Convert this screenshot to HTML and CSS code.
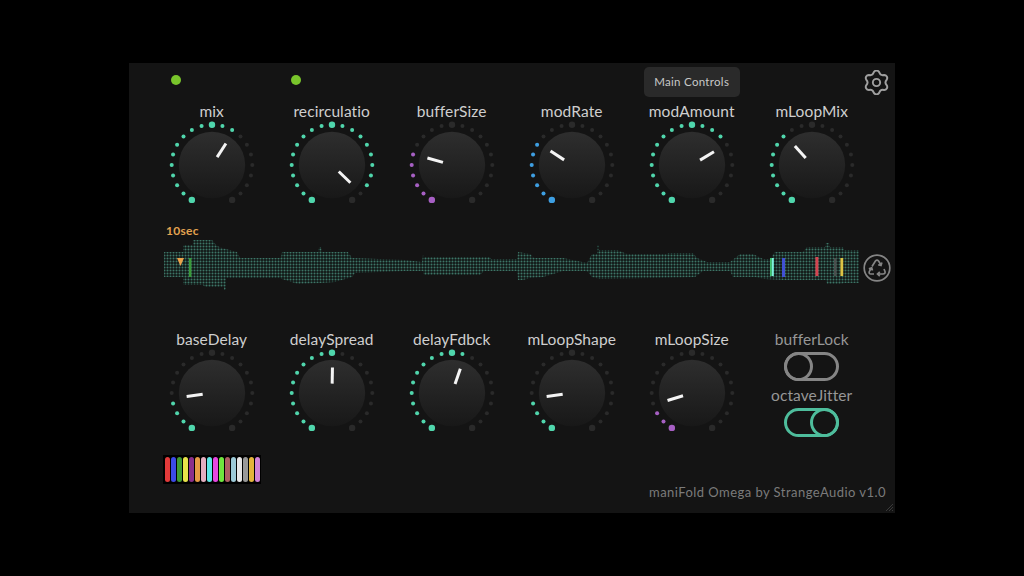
FILE: index.html
```html
<!DOCTYPE html>
<html lang="en">
<head>
<meta charset="utf-8">
<title>maniFold Omega</title>
<link rel="stylesheet" href="styles.css">
</head>
<body>
<svg class="defs" aria-hidden="true">
  <defs>
    <linearGradient id="capFill" x1="0" y1="0" x2="0" y2="1">
      <stop offset="0" stop-color="#2e2e2e"/>
      <stop offset="1" stop-color="#181818"/>
    </linearGradient>
    <pattern id="waveGrid" width="3" height="3" patternUnits="userSpaceOnUse" x="164" y="240">
      <rect width="3" height="3" fill="#161e1c"/>
      <rect width="1" height="3" fill="#233f38"/>
      <rect width="3" height="1" fill="#233f38"/>
      <rect width="1" height="1" fill="#3f7466"/>
    </pattern>
    <clipPath id="waveEnvelope">
      <polygon points="164,252 183,252 183,245 193,245 193,240 212,240 217,246 222,248 237,252 240,258 281,258 282,252 318,252 319,247 321,247 322,252 348,252 352,258 405,260 422,262 423,255 424,257 490,257 491,259 517,259 518,252 530,254 534,258 563,258 587,263 592,254 597,254 597,245 599,245 599,250 617,250 627,254 667,254 668,253 693,253 697,258 707,262 730,262 740,254 753,254 763,259 770,259 775,252 803,252 807,247 825,247 826,243 829,243 830,247 843,247 844,250 859,250 859,283 843,283 842,284 827,284 826,280 783,280 765,279 755,277 733,277 730,271 703,271 695,277 652,278 600,279 592,277 587,271 563,271 543,277 530,278 523,280 518,280 517,271 484,271 480,275 424,275 423,271 405,271 355,273 352,277 335,282 320,283 298,284 282,279 281,278 226,278 226,290 224,290 224,287 205,287 203,285 183,285 183,277 164,277"/>
    </clipPath>
    <g id="L0"><circle cx="-20.15" cy="34.9" r="3.2"/></g>
    <g id="L1"><use href="#L0"/><circle cx="-28.5" cy="28.5" r="2"/></g>
    <g id="L2"><use href="#L1"/><circle cx="-34.9" cy="20.15" r="2"/></g>
    <g id="L3"><use href="#L2"/><circle cx="-38.93" cy="10.43" r="2"/></g>
    <g id="L4"><use href="#L3"/><circle cx="-40.3" cy="0" r="2"/></g>
    <g id="L5"><use href="#L4"/><circle cx="-38.93" cy="-10.43" r="2"/></g>
    <g id="L6"><use href="#L5"/><circle cx="-34.9" cy="-20.15" r="2"/></g>
    <g id="L7"><use href="#L6"/><circle cx="-28.5" cy="-28.5" r="2"/></g>
    <g id="L8"><use href="#L7"/><circle cx="-20.15" cy="-34.9" r="2"/></g>
    <g id="L9"><use href="#L8"/><circle cx="-10.43" cy="-38.93" r="2"/></g>
    <g id="L10"><use href="#L9"/><circle cx="0" cy="-40.3" r="3.2"/></g>
    <g id="L11"><use href="#L10"/><circle cx="10.43" cy="-38.93" r="2"/></g>
    <g id="L12"><use href="#L11"/><circle cx="20.15" cy="-34.9" r="2"/></g>
    <g id="L13"><use href="#L12"/><circle cx="28.5" cy="-28.5" r="2"/></g>
    <g id="L14"><use href="#L13"/><circle cx="34.9" cy="-20.15" r="2"/></g>
    <g id="L15"><use href="#L14"/><circle cx="38.93" cy="-10.43" r="2"/></g>
    <g id="L16"><use href="#L15"/><circle cx="40.3" cy="0" r="2"/></g>
    <g id="L17"><use href="#L16"/><circle cx="38.93" cy="10.43" r="2"/></g>
    <g id="L18"><use href="#L17"/><circle cx="34.9" cy="20.15" r="2"/></g>
    <g id="L19"><use href="#L18"/><circle cx="28.5" cy="28.5" r="2"/></g>
    <g id="L20"><use href="#L19"/><circle cx="20.15" cy="34.9" r="3.2"/></g>
    <circle id="cap" r="33.2" fill="url(#capFill)"/>
  </defs>
</svg>

<main class="panel">
  <header class="grid status">
    <div class="cell"><span class="led"></span></div>
    <div class="cell"><span class="led"></span></div>
    <div></div>
    <div></div>
    <div class="tab">Main Controls</div>
    <div></div>
    <svg class="gear" viewBox="-13 -13 26 26"><path d="M-2.85,-10.63A3.2 3.2 0 0 1 2.85,-10.63Q4,-6.93 7.78,-7.78A3.2 3.2 0 0 1 10.63,-2.85Q8,0 10.63,2.85A3.2 3.2 0 0 1 7.78,7.78Q4,6.93 2.85,10.63A3.2 3.2 0 0 1 -2.85,10.63Q-4,6.93 -7.78,7.78A3.2 3.2 0 0 1 -10.63,2.85Q-8,0 -10.63,-2.85A3.2 3.2 0 0 1 -7.78,-7.78Q-4,-6.93 -2.85,-10.63Z"/><circle r="3.8"/></svg>
  </header>

  <section class="grid knobs">
    <div class="knob"><div class="label">mix</div><svg class="dial" viewBox="-50 -44 100 88"><use href="#L20" class="dim"/><use href="#L12" class="teal"/><use href="#cap"/><line class="ptr" y1="-9.4" y2="-25.6" transform="rotate(33)"/></svg></div>
    <div class="knob"><div class="label">recirculatio</div><svg class="dial" viewBox="-50 -44 100 88"><use href="#L20" class="dim"/><use href="#L18" class="teal"/><use href="#cap"/><line class="ptr" y1="-9.4" y2="-25.6" transform="rotate(134)"/></svg></div>
    <div class="knob"><div class="label">bufferSize</div><svg class="dial" viewBox="-50 -44 100 88"><use href="#L20" class="dim"/><use href="#L5" class="purple"/><use href="#cap"/><line class="ptr" y1="-9.4" y2="-25.6" transform="rotate(-74)"/></svg></div>
    <div class="knob"><div class="label">modRate</div><svg class="dial" viewBox="-50 -44 100 88"><use href="#L20" class="dim"/><use href="#L6" class="blue"/><use href="#cap"/><line class="ptr" y1="-9.4" y2="-25.6" transform="rotate(-57)"/></svg></div>
    <div class="knob"><div class="label">modAmount</div><svg class="dial" viewBox="-50 -44 100 88"><use href="#L20" class="dim"/><use href="#L13" class="teal"/><use href="#cap"/><line class="ptr" y1="-9.4" y2="-25.6" transform="rotate(59)"/></svg></div>
    <div class="knob"><div class="label">mLoopMix</div><svg class="dial" viewBox="-50 -44 100 88"><use href="#L20" class="dim"/><use href="#L7" class="teal"/><use href="#cap"/><line class="ptr" y1="-9.4" y2="-25.6" transform="rotate(-42)"/></svg></div>
  </section>

  <section class="wave-section">
    <div class="time">10sec</div>
    <div class="wave-row">
      <svg class="wave" viewBox="164 240 696 51">
        <rect x="164" y="240" width="696" height="51" fill="url(#waveGrid)" clip-path="url(#waveEnvelope)"/>
        <polygon points="177,258 184,258 180.5,266" fill="#eba24a"/>
        <rect x="189" y="258" width="2.4" height="19" fill="#3a9a3a"/>
        <rect x="770" y="258" width="1.8" height="18" fill="#3fc46a"/>
        <rect x="771.8" y="258" width="2" height="18" fill="#7df0dc"/>
        <rect x="782" y="258" width="3" height="19" fill="#4150d4"/>
        <rect x="815.4" y="257" width="3" height="19" fill="#d44450"/>
        <rect x="834" y="258" width="2.6" height="18" fill="#4a4f4d"/>
        <rect x="840.4" y="258" width="2.8" height="18" fill="#dcc344"/>
      </svg>
      <svg class="recycle" viewBox="-14 -14 28 28">
        <circle r="12.8"/>
        <path d="M-5,-1.5L-1.6,-7Q0,-8.6 1.6,-7L4,-3M4.9,-5.6L4,-2.6L1.2,-3.3"/>
        <path d="M7,1L8,3.4Q8.6,6 6,6L0.6,6M2.8,3.8L0.5,6L2.8,8.2"/>
        <path d="M-3,6L-6,6Q-8.6,6 -7.6,3.4L-5.5,0M-8.1,0.9L-5.3,-0.2L-4.5,2.6"/>
      </svg>
    </div>
  </section>

  <section class="grid knobs lower">
    <div class="knob"><div class="label">baseDelay</div><svg class="dial" viewBox="-50 -44 100 88"><use href="#L20" class="dim"/><use href="#L3" class="teal"/><use href="#cap"/><line class="ptr" y1="-9.4" y2="-25.6" transform="rotate(-98)"/></svg></div>
    <div class="knob"><div class="label">delaySpread</div><svg class="dial" viewBox="-50 -44 100 88"><use href="#L20" class="dim"/><use href="#L10" class="teal"/><use href="#cap"/><line class="ptr" y1="-9.4" y2="-25.6" transform="rotate(1)"/></svg></div>
    <div class="knob"><div class="label">delayFdbck</div><svg class="dial" viewBox="-50 -44 100 88"><use href="#L20" class="dim"/><use href="#L11" class="teal"/><use href="#cap"/><line class="ptr" y1="-9.4" y2="-25.6" transform="rotate(19)"/></svg></div>
    <div class="knob"><div class="label">mLoopShape</div><svg class="dial" viewBox="-50 -44 100 88"><use href="#L20" class="dim"/><use href="#L3" class="teal"/><use href="#cap"/><line class="ptr" y1="-9.4" y2="-25.6" transform="rotate(-98)"/></svg></div>
    <div class="knob"><div class="label">mLoopSize</div><svg class="dial" viewBox="-50 -44 100 88"><use href="#L20" class="dim"/><use href="#L2" class="purple"/><use href="#cap"/><line class="ptr" y1="-9.4" y2="-25.6" transform="rotate(-107)"/></svg></div>
    <div class="switches">
      <div class="label muted">bufferLock</div>
      <div class="toggle off"><span class="thumb"></span></div>
      <div class="label muted">octaveJitter</div>
      <div class="toggle on"><span class="thumb"></span></div>
    </div>
  </section>

  <footer class="bottom">
    <div class="palette">
      <span class="swatch c1"></span><span class="swatch c2"></span><span class="swatch c3"></span><span class="swatch c4"></span>
      <span class="swatch c5"></span><span class="swatch c6"></span><span class="swatch c7"></span><span class="swatch c8"></span>
      <span class="swatch c9"></span><span class="swatch c10"></span><span class="swatch c11"></span><span class="swatch c12"></span>
      <span class="swatch c13"></span><span class="swatch c14"></span><span class="swatch c15"></span><span class="swatch c16"></span>
    </div>
    <div class="credit">maniFold Omega by StrangeAudio v1.0</div>
  </footer>

  <svg class="grip" viewBox="0 0 10 10"><path d="M9,2L2,9M9,5L5,9M9,8L8,9"/></svg>
</main>
</body>
</html>
```
FILE: styles.css
```css
* { box-sizing: border-box; }

html, body {
  margin: 0;
  height: 100%;
}

body {
  background: #000;
  display: flex;
  align-items: center;
  justify-content: center;
  font-family: Lato, "Liberation Sans", sans-serif;
  overflow: hidden;
}

.defs {
  position: absolute;
  width: 0;
  height: 0;
}

.panel {
  position: relative;
  width: 766px;
  height: 450px;
  background: #141414;
  padding: 4px 0 0 0;
}

.grid {
  display: grid;
  grid-template-columns: repeat(6, 120px) 1fr;
  padding-left: 22.7px;
  padding-right: 6px;
}

.status {
  height: 30px;
  align-items: center;
}

.cell {
  display: flex;
  padding-left: 19px;
  padding-bottom: 4px;
}

.led {
  width: 10px;
  height: 10px;
  border-radius: 50%;
  background: #79c52b;
}

.tab {
  width: 96px;
  height: 30px;
  justify-self: center;
  background: #2a2a2a;
  border-radius: 5px;
  color: #c8c8c8;
  font-size: 11.5px;
  line-height: 30px;
  text-align: center;
  letter-spacing: 0.3px;
}

.gear {
  width: 25px;
  height: 25px;
  justify-self: start;
  margin-left: -8px;
  fill: none;
  stroke: #a0a0a0;
  stroke-width: 2;
}

.knobs {
  margin-top: 4px;
}

.knobs.lower {
  margin-top: 0;
}

.knob {
  display: flex;
  flex-direction: column;
  align-items: center;
}

.label {
  height: 20px;
  line-height: 20px;
  font-size: 15.5px;
  color: #cfcfcf;
  white-space: nowrap;
  letter-spacing: 0.1px;
}

.label.muted {
  color: #979797;
}

.dial {
  display: block;
  width: 100px;
  height: 88px;
}

.dim { fill: #2a2a2a; }
.teal { fill: #4fd6ac; }
.purple { fill: #a75fc4; }
.blue { fill: #3d9fe3; }

.ptr {
  stroke: #f4f4f4;
  stroke-width: 3;
}

.wave-section {
  height: 120px;
  padding: 13px 0 0 35px;
}

.time {
  height: 18px;
  line-height: 18px;
  margin-left: 2px;
  font-size: 12px;
  font-weight: 700;
  color: #e3a350;
  letter-spacing: 0.3px;
}

.wave-row {
  display: flex;
  gap: 3px;
  align-items: flex-start;
}

.wave {
  display: block;
  width: 696px;
  height: 51px;
}

.recycle {
  width: 28px;
  height: 28px;
  margin-top: 14px;
  fill: none;
  stroke: #858585;
  stroke-width: 1.7;
}

.switches {
  display: flex;
  flex-direction: column;
  align-items: center;
}

.toggle {
  display: flex;
  width: 55px;
  height: 29px;
  margin: 3px 0 4px;
  border: 3px solid;
  border-radius: 15px;
}

.thumb {
  width: 29px;
  height: 29px;
  margin: -3px;
  border: 3px solid;
  border-radius: 50%;
}

.toggle.off { color: #858585; justify-content: flex-start; }
.toggle.on { color: #4ebd9c; justify-content: flex-end; }

.bottom {
  display: flex;
  justify-content: space-between;
  align-items: flex-start;
  margin-top: 14px;
  padding: 0 9px 0 34px;
}

.palette {
  display: flex;
  gap: 1px;
  background: #000;
  padding: 2px 1.5px;
  height: 29px;
}

.swatch {
  width: 5px;
  border-radius: 2.5px;
}

.c1 { background: #e23a3a; }
.c2 { background: #3c4ae6; }
.c3 { background: #3f9a34; }
.c4 { background: #e8e34a; }
.c5 { background: #8a2f8c; }
.c6 { background: #e59a45; }
.c7 { background: #e3aebf; }
.c8 { background: #5fe6e6; }
.c9 { background: #e647e0; }
.c10 { background: #6fe63f; }
.c11 { background: #ad5f63; }
.c12 { background: #9cc9d6; }
.c13 { background: #e6e6e6; }
.c14 { background: #999999; }
.c15 { background: #e3b53c; }
.c16 { background: #d283d8; }

.credit {
  margin-top: 27px;
  height: 20px;
  line-height: 20px;
  font-size: 13px;
  color: #7b7b7b;
  letter-spacing: 0.45px;
  white-space: nowrap;
}

.grip {
  position: absolute;
  right: 1px;
  bottom: 1px;
  width: 10px;
  height: 10px;
  fill: none;
  stroke: #3a3a3a;
  stroke-width: 1;
}
```
